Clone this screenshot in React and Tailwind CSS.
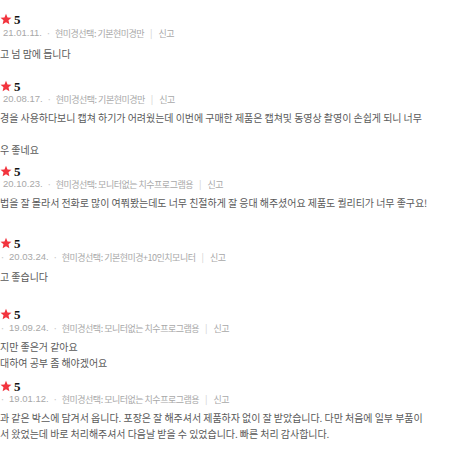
import React from "react";

const reviews = [
  {
    dot: false,
    date: "21.01.11.",
    option: "현미경선택: 기본현미경만",
    lines: ["고 넘 맘에 듭니다"],
    metaMt: "mt-[1px]",
    contentMt: "mt-[7px]",
    mb: "mb-[17px]",
  },
  {
    dot: false,
    date: "20.08.17.",
    option: "현미경선택: 기본현미경만",
    lines: [
      "경을 사용하다보니 캡쳐 하기가 어려웠는데 이번에 구매한 제품은 캡쳐및 동영상 촬영이 손쉽게 되니 너무",
      "",
      "우 좋네요",
    ],
    metaMt: "mt-0",
    contentMt: "mt-[5px]",
    mb: "mb-[6px]",
  },
  {
    dot: false,
    date: "20.10.23.",
    option: "현미경선택: 모니터없는 치수프로그램용",
    lines: [
      "법을 잘 몰라서 전화로 많이 여쭤봤는데도 너무 친절하게 잘 응대 해주셨어요 제품도 퀄리티가 너무 좋구요!",
    ],
    metaMt: "mt-0",
    contentMt: "mt-[5px]",
    mb: "mb-[25px]",
  },
  {
    dot: true,
    date: "20.03.24.",
    option: "현미경선택: 기본현미경+10인치모니터",
    lines: ["고 좋습니다"],
    metaMt: "mt-[1px]",
    contentMt: "mt-[6px]",
    mb: "mb-[22px]",
  },
  {
    dot: true,
    date: "19.09.24.",
    option: "현미경선택: 모니터없는 치수프로그램용",
    lines: ["지만 좋은거 같아요", "대하여 공부 좀 해야겠어요"],
    metaMt: "mt-[1px]",
    contentMt: "mt-[5px]",
    mb: "mb-[8px]",
  },
  {
    dot: true,
    date: "19.01.12.",
    option: "현미경선택: 모니터없는 치수프로그램용",
    lines: [
      "과 같은 박스에 담겨서 옵니다. 포장은 잘 해주셔서 제품하자 없이 잘 받았습니다. 다만 처음에 일부 부품이",
      "서 왔었는데 바로 처리해주셔서 다음날 받을 수 있었습니다. 빠른 처리 감사합니다.",
    ],
    metaMt: "mt-0",
    contentMt: "mt-[5px]",
    mb: "mb-0",
  },
];

function Star() {
  return (
    <svg width="12" height="12" viewBox="0 0 24 24" className="shrink-0">
      <path
        d="M12 1.5l3.09 7.26 7.86.68-5.96 5.17 1.79 7.69L12 18.27 5.22 22.3l1.79-7.69L1.05 9.44l7.86-.68z"
        fill="#f2343e"
      />
    </svg>
  );
}

function Review({ r }) {
  return (
    <div className={r.mb}>
      <div className="flex h-[14px] items-center gap-[2px]">
        <Star />
        <span className="font-['Liberation_Serif',serif] text-[13px] font-bold leading-none text-[#111]">
          5
        </span>
      </div>
      <div
        className={`${r.metaMt} flex h-[12px] items-center whitespace-nowrap font-['Noto_Sans_CJK_KR','Noto_Sans',sans-serif] text-[9px] leading-none text-[#a8a8a8]`}
      >
        {r.dot ? (
          <span className="mr-[4px] text-[#c8c8c8]">·</span>
        ) : (
          <span className="w-[3px]" />
        )}
        <span className="font-['Liberation_Sans',sans-serif] text-[9.5px]">{r.date}</span>
        <span className="mx-[4px] text-[#c8c8c8]">·</span>
        <span className="tracking-[-0.5px]">{r.option}</span>
        <span className="mx-[6px] text-[#d0d0d0]">|</span>
        <span className="tracking-[-0.5px]">신고</span>
      </div>
      <div
        className={`${r.contentMt} font-['Noto_Sans_CJK_KR','Noto_Sans',sans-serif] text-[10px] leading-[16px] tracking-[-0.05px] text-[#5a5a5a]`}
      >
        {r.lines.map((l, i) => (
          <div key={i} className="h-[16px] whitespace-nowrap">
            {l}
          </div>
        ))}
      </div>
    </div>
  );
}

export default function App() {
  return (
    <div className="h-[450px] w-[450px] overflow-hidden bg-white pt-[12px]">
      {reviews.map((r, i) => (
        <Review key={i} r={r} />
      ))}
    </div>
  );
}
